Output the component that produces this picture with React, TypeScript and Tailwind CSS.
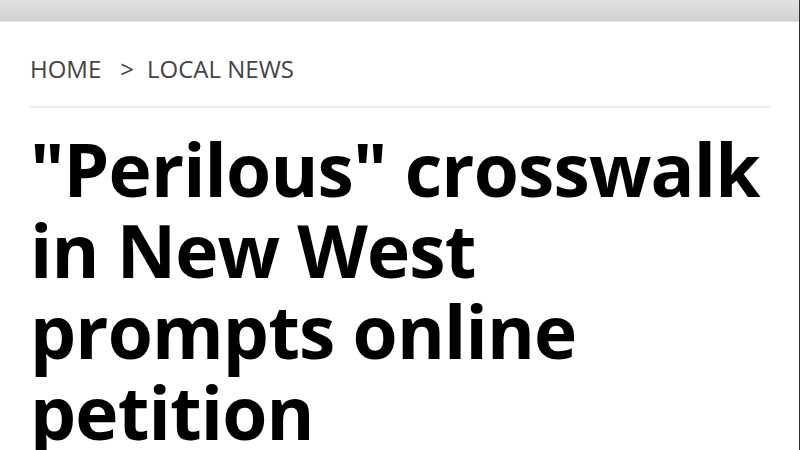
import React from "react";

export default function App() {
  return (
    <div className="w-[800px] h-[450px] overflow-hidden bg-white relative" style={{ fontFamily: '"Open Sans", sans-serif' }}>
      <div className="h-[22px] bg-gradient-to-b from-[#e2e2e2] to-[#d0d0d0] border-b border-[#e8e8e8]" />
      <div className="px-[30px] pt-[31px]">
        <div className="flex items-center text-[24px] leading-[32px] text-[#444] tracking-[0px]">
          <span>HOME</span>
          <span className="ml-[19px]">&gt;</span>
          <span className="ml-[13px]">LOCAL NEWS</span>
        </div>
        <div className="mt-[21px] h-[2px] bg-[#eeeeee]" />
        <h1 className="mt-[20px] text-[73px] leading-[81px] font-bold text-black tracking-[-0.85px]">
          "Perilous" crosswalk in New West prompts online petition
        </h1>
      </div>
      <div className="absolute right-0 top-0 h-full w-px bg-[#333]" />
    </div>
  );
}
